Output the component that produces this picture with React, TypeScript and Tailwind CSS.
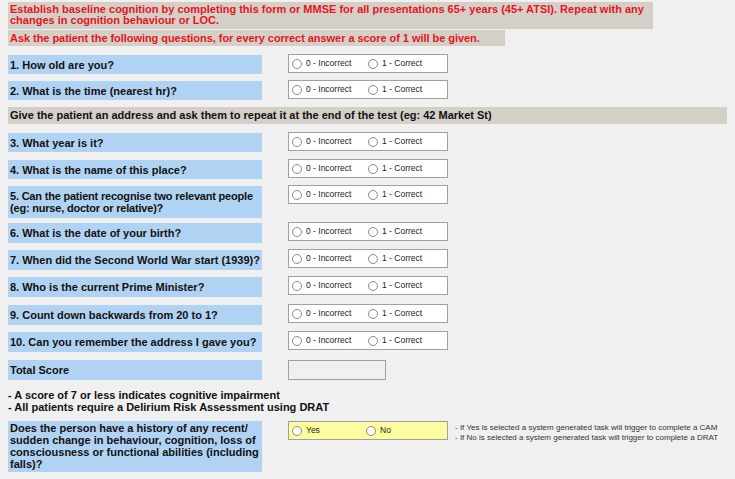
import React from "react";

const font = { fontFamily: '"Liberation Sans", Arial, sans-serif' };

function Radio({ label, w }: { label: string; w: string }) {
  return (
    <div className={`flex items-center ${w}`}>
      <span className="w-[10px] h-[10px] rounded-full border border-[#8a8a8a] bg-white shrink-0" />
      <span className="ml-[4px] text-[8.5px] text-[#222] leading-none whitespace-nowrap">{label}</span>
    </div>
  );
}

function Choice({ yellow }: { yellow?: boolean }) {
  return (
    <div
      className={`ml-[26px] -mt-[1px] w-[160px] h-[19px] border border-[#a0a0a0] flex items-center pl-[3px] ${
        yellow ? "bg-[#fdfd9f]" : "bg-white"
      }`}
    >
      {yellow ? (
        <>
          <Radio label="Yes" w="w-[74px]" />
          <Radio label="No" w="w-[70px]" />
        </>
      ) : (
        <>
          <Radio label="0 - Incorrect" w="w-[76px]" />
          <Radio label="1 - Correct" w="w-[70px]" />
        </>
      )}
    </div>
  );
}

function Row({ mt, h, text, children }: { mt: string; h: string; text: React.ReactNode; children?: React.ReactNode }) {
  return (
    <div className={`flex items-start ${mt}`}>
      <div className={`w-[254px] ${h} bg-[#b1d3f3] px-[2px] flex items-center text-[11px] font-bold leading-[12px] text-[#111] whitespace-nowrap`}>
        <span>{text}</span>
      </div>
      {children ?? <Choice />}
    </div>
  );
}

export default function App() {
  return (
    <div className="w-[735px] h-[479px] bg-[#f0f0f0] overflow-hidden pl-[8px]" style={font}>
      <div className="pt-[2px]">
        <div className="w-[645px] h-[27px] bg-[#d4d0c8] px-[2px] pt-[2px] text-[11px] font-bold leading-[11px] text-[#e8141c]">
          Establish baseline cognition by completing this form or MMSE for all presentations 65+ years (45+ ATSI). Repeat with any changes in cognition behaviour or LOC.
        </div>
        <div className="mt-[1px] w-[497px] h-[16px] bg-[#d4d0c8] px-[2px] flex items-center text-[11px] font-bold text-[#e8141c] whitespace-nowrap tracking-[-0.05px]">
          Ask the patient the following questions, for every correct answer a score of 1 will be given.
        </div>
      </div>

      <Row mt="mt-[9px]" h="h-[19px]" text="1. How old are you?" />
      <Row mt="mt-[7px]" h="h-[19px]" text="2. What is the time (nearest hr)?" />
      <div className="mt-[7px] w-[719px] h-[17px] bg-[#d4d0c8] px-[2px] flex items-center text-[11px] font-bold text-[#111] whitespace-nowrap">
        Give the patient an address and ask them to repeat it at the end of the test (eg: 42 Market St)
      </div>
      <Row mt="mt-[9px]" h="h-[19px]" text="3. What year is it?" />
      <Row mt="mt-[8px]" h="h-[19px]" text="4. What is the name of this place?" />
      <Row
        mt="mt-[7px]"
        h="h-[32px]"
        text={
          <span className="tracking-[-0.2px]">
            5. Can the patient recognise two relevant people
            <br />
            (eg: nurse, doctor or relative)?
          </span>
        }
      />
      <Row mt="mt-[5px]" h="h-[20px]" text="6. What is the date of your birth?" />
      <Row mt="mt-[7px]" h="h-[20px]" text="7. When did the Second World War start (1939)?" />
      <Row mt="mt-[7px]" h="h-[20px]" text="8. Who is the current Prime Minister?" />
      <Row mt="mt-[8px]" h="h-[20px]" text="9. Count down backwards from 20 to 1?" />
      <Row mt="mt-[7px]" h="h-[20px]" text="10. Can you remember the address I gave you?" />
      <Row mt="mt-[8px]" h="h-[20px]" text="Total Score">
        <div className="ml-[26px] w-[98px] h-[20px] border border-[#a0a0a0] bg-[#f0f0f0]" />
      </Row>

      <div className="mt-[9px] text-[11px] font-bold leading-[12px] text-[#111]">
        <div>- A score of 7 or less indicates cognitive impairment</div>
        <div>- All patients require a Delirium Risk Assessment using DRAT</div>
      </div>

      <div className="flex items-start mt-[8px]">
        <div className="w-[254px] h-[51px] bg-[#b1d3f3] px-[2px] pt-[1px] text-[11px] font-bold leading-[12px] text-[#111]">
          Does the person have a history of any recent/ sudden change in behaviour, cognition, loss of consciousness or functional abilities (including falls)?
        </div>
        <div className="mt-[1px]">
          <Choice yellow />
        </div>
        <div className="ml-[7px] mt-[2px] text-[8px] leading-[10px] text-[#333] whitespace-nowrap">
          <div>- If Yes is selected a system generated task will trigger to complete a CAM</div>
          <div>- If No is selected a system generated task will trigger to complete a DRAT</div>
        </div>
      </div>
    </div>
  );
}
